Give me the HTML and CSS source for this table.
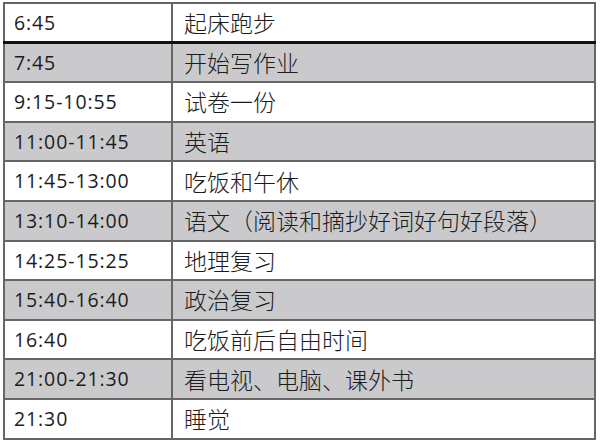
FILE: index.html
```html
<!DOCTYPE html>
<html lang="zh-CN">
<head>
<meta charset="utf-8">
<title>作息时间表</title>
<link rel="stylesheet" href="styles.css">
</head>
<body>
<table class="schedule">
  <tbody>
    <tr class="first"><td class="time">6:45</td><td class="task">起床跑步</td></tr>
    <tr class="shade"><td class="time">7:45</td><td class="task">开始写作业</td></tr>
    <tr><td class="time">9:15-10:55</td><td class="task">试卷一份</td></tr>
    <tr class="shade"><td class="time">11:00-11:45</td><td class="task">英语</td></tr>
    <tr><td class="time">11:45-13:00</td><td class="task">吃饭和午休</td></tr>
    <tr class="shade"><td class="time">13:10-14:00</td><td class="task">语文（阅读和摘抄好词好句好段落）</td></tr>
    <tr><td class="time">14:25-15:25</td><td class="task">地理复习</td></tr>
    <tr class="shade"><td class="time">15:40-16:40</td><td class="task">政治复习</td></tr>
    <tr><td class="time">16:40</td><td class="task">吃饭前后自由时间</td></tr>
    <tr class="shade"><td class="time">21:00-21:30</td><td class="task">看电视、电脑、课外书</td></tr>
    <tr><td class="time">21:30</td><td class="task">睡觉</td></tr>
  </tbody>
</table>
</body>
</html>
```

FILE: styles.css
```css
html, body {
  margin: 0;
  padding: 0;
  background: #ffffff;
}

body {
  padding: 2px 0 0 3px;
}

.schedule {
  border-collapse: collapse;
  width: 593px;
  table-layout: fixed;
  color: #1c1c1c;
  border: 2px solid #666666;
}

.schedule tr {
  height: 39.6px;
}

.schedule td {
  border: 2px solid #666666;
  vertical-align: middle;
  white-space: nowrap;
  line-height: 1;
}

.schedule tr.first td {
  border-bottom: 3px solid #111111;
}

.schedule tr.shade td {
  background: #cacacc;
}

.time {
  width: 157px;
  padding: 0 0 0 9px;
  font-family: "Open Sans", "Liberation Sans", sans-serif;
  font-size: 19.5px;
  letter-spacing: 0.9px;
}

.task {
  padding: 0 0 0 11px;
  font-family: "Noto Sans CJK SC", "Noto Sans", sans-serif;
  font-size: 23px;
  font-weight: 300;
}
```
